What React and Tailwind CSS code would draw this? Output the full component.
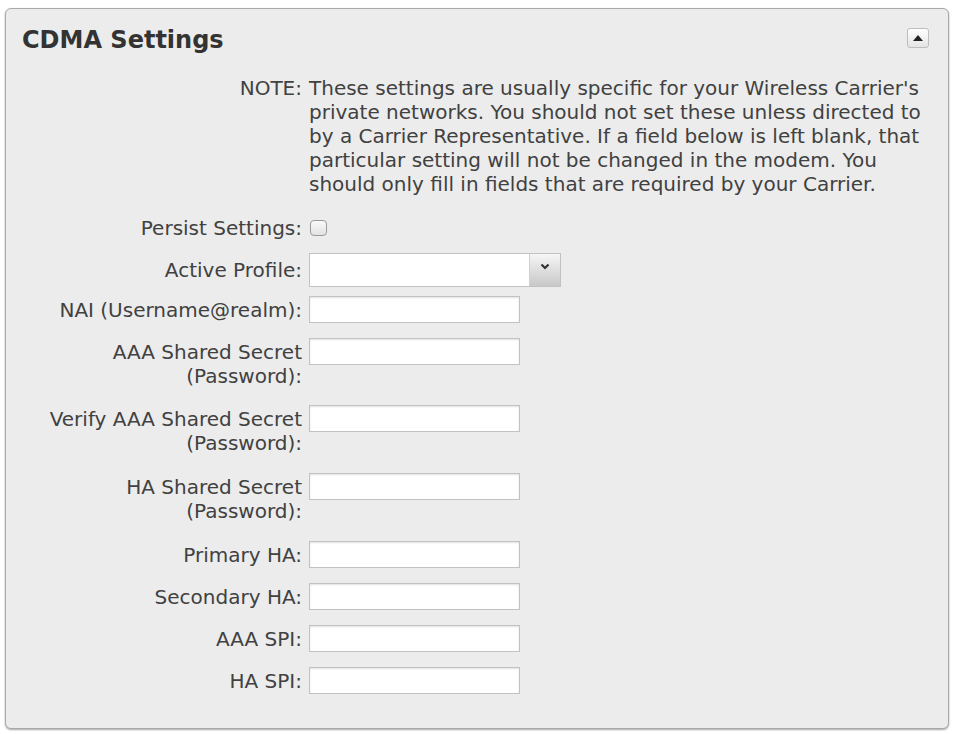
import React from 'react';

const TextField = () => (
  <div className="h-[27px] w-[211px] border border-[#c2c2c2] bg-white shadow-[inset_0_1px_2px_rgba(0,0,0,0.12)]" />
);

const Row = ({ label, children, className = '' }) => (
  <div className={`flex items-start ${className}`}>
    <div className="w-[296px] shrink-0 pt-[2px] text-right">{label}</div>
    <div className="ml-[7px]">{children}</div>
  </div>
);

const CdmaSettings = () => {
  return (
    <div className="min-h-[734px] bg-white pt-[8px] pl-[5px]" style={{ fontFamily: '"DejaVu Sans", "Liberation Sans", sans-serif' }}>
      <div className="relative w-[944px] rounded-[6px] border border-[#a9a9a9] bg-[#ececec] pb-[34px] shadow-[0_1px_2px_rgba(0,0,0,0.35)]">
        {/* header */}
        <h2 className="pl-[16px] pt-[15px] text-[24px] leading-[32px] font-bold text-[#333]">CDMA Settings</h2>
        <button className="absolute right-[19px] top-[19px] flex h-[20px] w-[22px] items-center justify-center rounded-[3px] border border-[#bdbdbd] bg-gradient-to-b from-white to-[#e4e4e4]">
          <svg width="10" height="6" viewBox="0 0 10 6">
            <polygon points="0,6 5,0 10,6" fill="#222" />
          </svg>
        </button>

        <div className="text-[20px] leading-[24px] text-[#414141]">
          {/* note */}
          <div className="mt-[20px] flex items-start">
            <div className="w-[296px] shrink-0 text-right">NOTE:</div>
            <p className="ml-[7px]">
              These settings are usually specific for your Wireless Carrier's<br />
              private networks. You should not set these unless directed to<br />
              by a Carrier Representative. If a field below is left blank, that<br />
              particular setting will not be changed in the modem. You<br />
              should only fill in fields that are required by your Carrier.
            </p>
          </div>

          <div className="mt-[20px] flex items-center">
            <div className="w-[296px] shrink-0 text-right">Persist Settings:</div>
            <div className="ml-[8px] h-[16px] w-[17px] rounded-[4px] border border-[#9a9a9a] bg-gradient-to-b from-[#fafafa] to-[#e2e2e2]" />
          </div>

          <div className="mt-[13px] flex items-center">
            <div className="w-[296px] shrink-0 text-right">Active Profile:</div>
            <div className="ml-[7px] flex h-[34px] w-[252px] border border-[#c2c2c2] bg-white">
              <div className="flex-1" />
              <div className="flex w-[31px] items-start justify-center border-l border-[#d0d0d0] bg-gradient-to-b from-[#f6f6f6] to-[#c8c8c8] pt-[9px]">
                <svg width="10" height="7" viewBox="0 0 10 7">
                  <polyline points="1.5,1.5 5,5 8.5,1.5" fill="none" stroke="#333" strokeWidth="2.2" />
                </svg>
              </div>
            </div>
          </div>

          <Row label="NAI (Username@realm):" className="mt-[9px]">
            <TextField />
          </Row>

          <Row label={<>AAA Shared Secret<br />(Password):</>} className="mt-[15px]">
            <TextField />
          </Row>

          <Row label={<>Verify AAA Shared Secret<br />(Password):</>} className="mt-[17px]">
            <TextField />
          </Row>

          <Row label={<>HA Shared Secret<br />(Password):</>} className="mt-[18px]">
            <TextField />
          </Row>

          <Row label="Primary HA:" className="mt-[18px]">
            <TextField />
          </Row>

          <Row label="Secondary HA:" className="mt-[15px]">
            <TextField />
          </Row>

          <Row label="AAA SPI:" className="mt-[15px]">
            <TextField />
          </Row>

          <Row label="HA SPI:" className="mt-[15px]">
            <TextField />
          </Row>
        </div>
      </div>
    </div>
  );
};

export default function App() {
  return <CdmaSettings />;
}
